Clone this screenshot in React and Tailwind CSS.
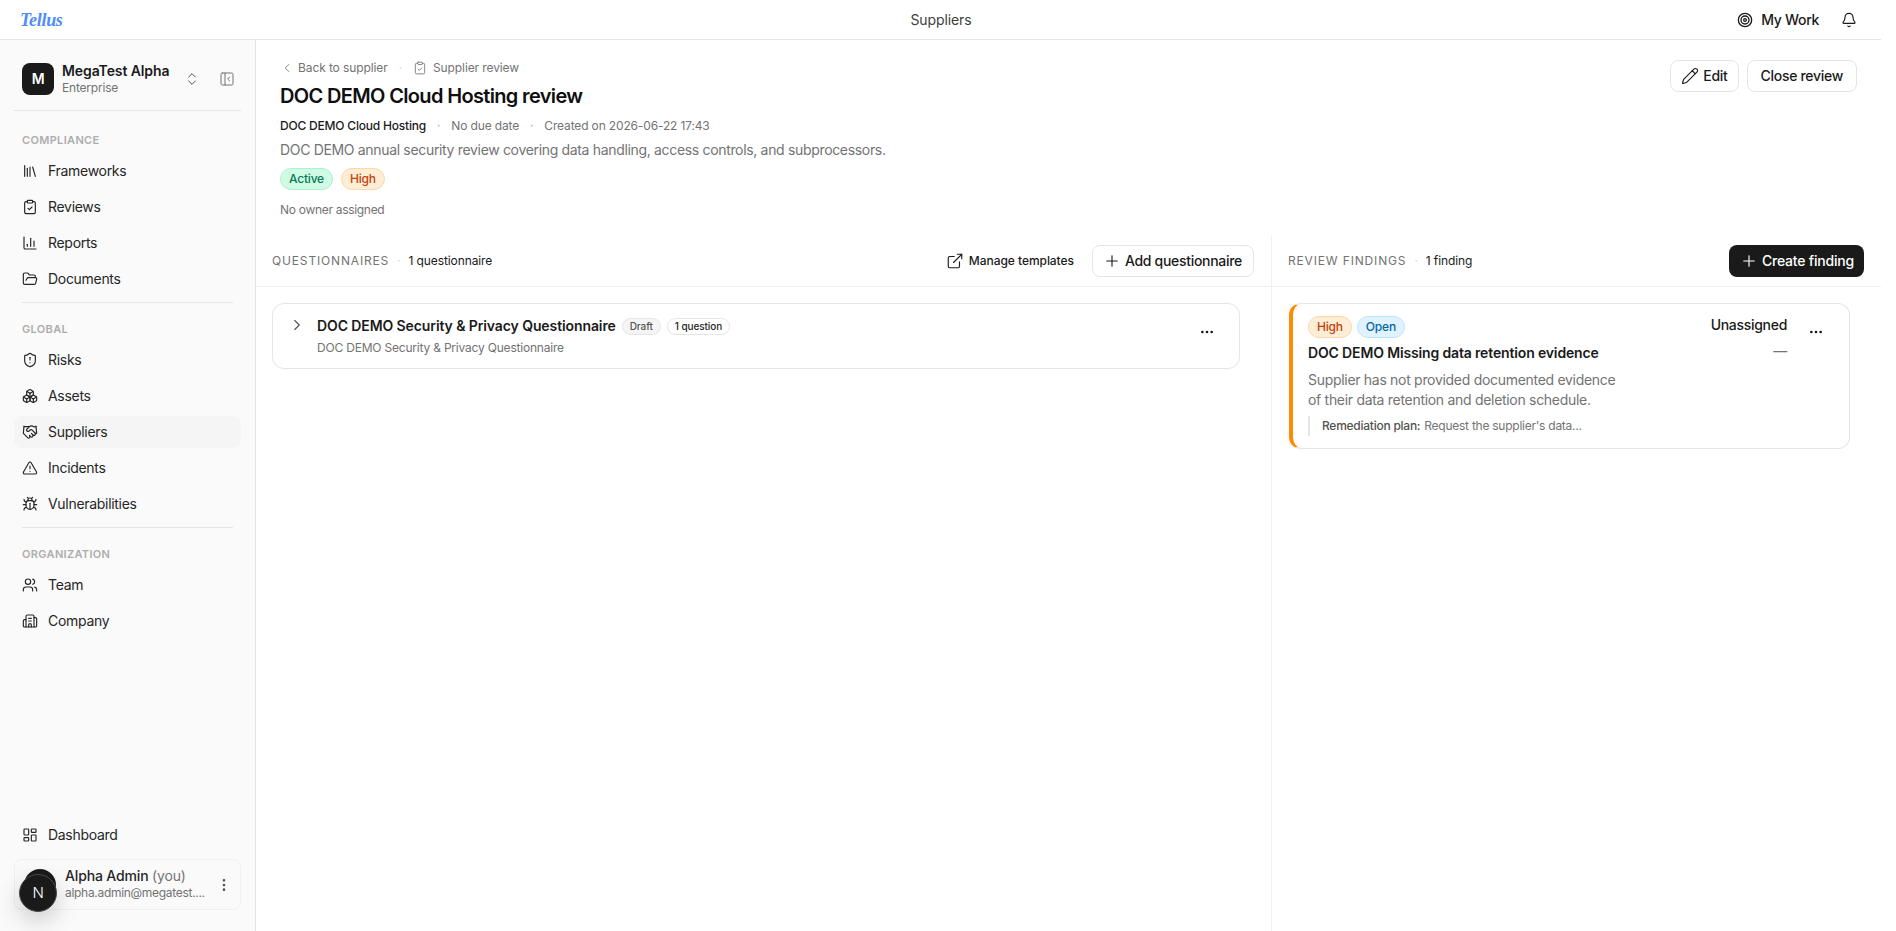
import {
  Bell,
  Boxes,
  Bug,
  Building2,
  ChartColumn,
  ChevronLeft,
  ChevronRight,
  ChevronsUpDown,
  ClipboardCheck,
  Ellipsis,
  EllipsisVertical,
  ExternalLink,
  FolderOpen,
  Handshake,
  LayoutDashboard,
  Library,
  PanelLeftClose,
  Pencil,
  Plus,
  ShieldAlert,
  Target,
  TriangleAlert,
  Users,
} from "lucide-react";

const compliance = [
  ["Frameworks", Library],
  ["Reviews", ClipboardCheck],
  ["Reports", ChartColumn],
  ["Documents", FolderOpen],
];
const globalNav = [
  ["Risks", ShieldAlert],
  ["Assets", Boxes],
  ["Suppliers", Handshake, true],
  ["Incidents", TriangleAlert],
  ["Vulnerabilities", Bug],
];
const organization = [
  ["Team", Users],
  ["Company", Building2],
];

function NavItem({ label, icon: Icon, active }) {
  return (
    <div
      className={`flex h-8 items-center gap-[10px] rounded-lg px-2 text-sm text-[#262626] ${
        active ? "bg-[#f5f5f5]" : ""
      }`}
    >
      <Icon size={16} strokeWidth={1.75} className="shrink-0" />
      <span>{label}</span>
    </div>
  );
}

function NavGroup({ title, items }) {
  return (
    <div>
      <p className="flex h-[26px] items-center px-2 pt-[2px] text-[11px] font-semibold tracking-[0.03em] text-[#adadad] uppercase">
        {title}
      </p>
      <div className="mt-[3px] flex flex-col gap-1">
        {items.map(([label, icon, active]) => (
          <NavItem key={label} label={label} icon={icon} active={active} />
        ))}
      </div>
    </div>
  );
}

function Badge({ className, children }) {
  return (
    <span
      className={`inline-flex h-[22px] items-center rounded-full border px-[8px] text-xs font-medium tracking-[-0.2px] ${className}`}
    >
      {children}
    </span>
  );
}

function Sidebar() {
  return (
    <aside className="flex w-[256px] shrink-0 flex-col border-r border-[#e5e5e5] bg-[#fafafa]">
      <div className="mx-[14px] flex h-[71px] items-center border-b border-[#e5e5e5] pt-[8px] pl-2">
        <div className="flex h-8 w-8 items-center justify-center rounded-lg bg-[#1a1a1a] text-sm font-semibold text-white">
          M
        </div>
        <div className="ml-2 flex-1">
          <p className="text-sm leading-[18px] font-semibold tracking-[-0.1px] text-[#1a1a1a]">
            MegaTest Alpha
          </p>
          <p className="text-xs leading-4 tracking-[-0.2px] text-[#737373]">Enterprise</p>
        </div>
        <ChevronsUpDown size={16} strokeWidth={1.5} className="mr-[19px] text-[#525252]" />
        <PanelLeftClose size={16} strokeWidth={1.5} className="mr-[6px] text-[#737373]" />
      </div>
      <div className="mx-[14px] mt-[15px] flex flex-1 flex-col">
        <NavGroup title="Compliance" items={compliance} />
        <div className="mx-2 mt-[7px] mb-[12px] border-t border-[#e5e5e5]" />
        <NavGroup title="Global" items={globalNav} />
        <div className="mx-2 mt-[7px] mb-[12px] border-t border-[#e5e5e5]" />
        <NavGroup title="Organization" items={organization} />
        <div className="mt-auto">
          <NavItem label="Dashboard" icon={LayoutDashboard} />
          <div className="mt-2 mb-[21px] flex h-[51px] items-center rounded-lg border border-[#f0f0f0] pr-[8px] pl-[9px]">
            <div className="mt-[9px] h-8 w-8 shrink-0 self-start rounded-full bg-[#1a1a1a]" />
            <div className="ml-[9px] min-w-0 flex-1 pb-[1px]">
              <p className="text-sm leading-[18px] font-medium tracking-[-0.15px] text-[#262626]">
                Alpha Admin <span className="font-normal text-[#737373]">(you)</span>
              </p>
              <p className="truncate text-xs leading-4 tracking-[-0.3px] text-[#737373]">
                alpha.admin@megatest....
              </p>
            </div>
            <EllipsisVertical size={16} className="shrink-0 text-[#525252]" />
          </div>
        </div>
      </div>
    </aside>
  );
}

function ReviewHeader() {
  return (
    <div className="flex h-[195px] shrink-0 justify-between pt-[19px] pr-6 pl-6">
      <div>
        <div className="flex h-[18px] items-center text-xs tracking-[-0.1px] text-[#737373]">
          <ChevronLeft size={14} strokeWidth={1.5} className="mr-[4px]" />
          <span>Back to supplier</span>
          <span className="mx-[11px] text-[#d4d4d4]">·</span>
          <ClipboardCheck size={14} strokeWidth={1.5} className="mr-[6px]" />
          <span>Supplier review</span>
        </div>
        <h1 className="mt-[5px] text-xl leading-7 font-semibold tracking-[-0.65px] text-[#0f0f0f]">
          DOC DEMO Cloud Hosting review
        </h1>
        <div className="mt-[7px] flex h-[18px] items-center text-xs tracking-[-0.15px] text-[#737373]">
          <span className="font-medium tracking-[-0.2px] text-[#1a1a1a]">DOC DEMO Cloud Hosting</span>
          <span className="mx-[11px] text-[#a8a8a8]">·</span>
          <span>No due date</span>
          <span className="mx-[11px] text-[#a8a8a8]">·</span>
          <span>Created on 2026-06-22 17:43</span>
        </div>
        <p className="mt-[5px] text-sm leading-5 tracking-[-0.33px] text-[#737373]">
          DOC DEMO annual security review covering data handling, access controls, and subprocessors.
        </p>
        <div className="mt-[8px] flex gap-2">
          <Badge className="border-[#a7f3d0] bg-[#d1fae5] text-[#047857]">Active</Badge>
          <Badge className="border-[#fed7aa] bg-[#ffedd5] text-[#c2410c]">High</Badge>
        </div>
        <p className="mt-[12px] text-xs leading-4 tracking-[-0.3px] text-[#737373]">No owner assigned</p>
      </div>
      <div className="flex gap-2 pt-[1px]">
        <button className="flex h-8 items-center gap-1 rounded-lg border border-[#e5e5e5] px-[10px] text-sm font-medium text-[#1a1a1a]">
          <Pencil size={18} strokeWidth={1.5} />
          Edit
        </button>
        <button className="h-8 rounded-lg border border-[#e5e5e5] px-[13px] text-sm font-medium text-[#1a1a1a]">
          Close review
        </button>
      </div>
    </div>
  );
}

function PanelHeader({ title, count, children, className }) {
  return (
    <div
      className={`flex h-[52px] shrink-0 items-center justify-between border-b border-[#f0f0f0] ${className}`}
    >
      <div className="flex items-center text-xs tracking-[-0.1px]">
        <span className="tracking-[0.07em] text-[#737373] uppercase">{title}</span>
        <span className="mx-[8px] text-[#d4d4d4]">·</span>
        <span className="text-[#1a1a1a]">{count}</span>
      </div>
      <div className="flex items-center gap-[18px]">{children}</div>
    </div>
  );
}

function QuestionnairesPanel() {
  return (
    <section className="flex w-[1016px] shrink-0 flex-col border-r border-[#f0f0f0]">
      <PanelHeader title="Questionnaires" count="1 questionnaire" className="pr-[17px] pl-4">
        <button className="flex items-center gap-[5px] text-xs font-medium tracking-[-0.05px] text-[#1a1a1a]">
          <ExternalLink size={18} strokeWidth={1.5} />
          Manage templates
        </button>
        <button className="flex h-8 items-center gap-1 rounded-lg border border-[#e5e5e5] pr-[11px] pl-[10px] text-sm font-medium text-[#1a1a1a]">
          <Plus size={18} strokeWidth={1.5} />
          Add questionnaire
        </button>
      </PanelHeader>
      <div className="pt-4 pr-[31px] pl-4">
        <div className="flex h-[66px] items-center rounded-xl border border-[#e5e5e5] pr-[24px]">
          <ChevronRight size={18} strokeWidth={1.5} className="mt-[12px] ml-[15px] self-start text-[#525252]" />
          <div className="ml-[11px] flex-1">
            <div className="flex items-center gap-[6px]">
              <span className="text-sm font-semibold tracking-[-0.1px] text-[#1a1a1a]">
                DOC DEMO Security &amp; Privacy Questionnaire
              </span>
              <span className="inline-flex h-[17px] items-center rounded-full border border-[#e5e5e5] bg-[#f5f5f5] px-[7px] text-[10px] font-medium tracking-[-0.1px] text-[#525252]">
                Draft
              </span>
              <span className="inline-flex h-[17px] items-center rounded-full border border-[#e5e5e5] px-[7px] text-[10px] font-medium tracking-[-0.1px] text-[#262626]">
                1 question
              </span>
            </div>
            <p className="mt-[4px] text-xs leading-4 tracking-[-0.2px] text-[#737373]">
              DOC DEMO Security &amp; Privacy Questionnaire
            </p>
          </div>
          <Ellipsis size={16} className="mb-[8px] text-[#1a1a1a]" />
        </div>
      </div>
    </section>
  );
}

function FindingsPanel() {
  return (
    <section className="flex min-w-0 flex-1 flex-col">
      <PanelHeader title="Review findings" count="1 finding" className="pr-[17px] pl-[16px]">
        <button className="flex h-8 items-center gap-1 rounded-lg bg-[#1a1a1a] pr-[10px] pl-[11px] text-sm font-medium tracking-[-0.2px] text-white">
          <Plus size={18} strokeWidth={1.5} />
          Create finding
        </button>
      </PanelHeader>
      <div className="pt-4 pr-[31px] pl-[17px]">
        <div className="flex h-[146px] rounded-xl border border-l-[4px] border-[#e5e5e5] border-l-[#ff8c00] pt-[12px] pr-[25px] pl-[15px]">
          <div className="flex-1">
            <div className="flex gap-[5px]">
              <Badge className="border-[#fed7aa] bg-[#ffedd5] text-[#c2410c]">High</Badge>
              <Badge className="border-[#bae6fd] bg-[#e0f2fe] text-[#0369a1]">Open</Badge>
            </div>
            <p className="mt-[4px] text-sm leading-[22px] font-semibold tracking-[-0.15px] text-[#1a1a1a]">
              DOC DEMO Missing data retention evidence
            </p>
            <p className="mt-[6px] w-[320px] text-sm leading-5 text-[#737373]">
              Supplier has not provided documented evidence of their data retention and deletion schedule.
            </p>
            <div className="mt-[6px] flex h-[20px] items-center border-l-2 border-[#e5e5e5] pl-[12px] text-xs tracking-[-0.25px]">
              <span className="font-medium text-[#525252]">Remediation plan:</span>
              <span className="ml-1 text-[#737373]">Request the supplier's data...</span>
            </div>
          </div>
          <div className="text-right">
            <p className="-mt-[1px] text-sm leading-5 font-medium text-[#1a1a1a]">Unassigned</p>
            <p className="mt-[6px] text-sm leading-5 text-[#737373]">—</p>
          </div>
          <Ellipsis size={16} className="mt-[8px] ml-[21px] text-[#1a1a1a]" />
        </div>
      </div>
    </section>
  );
}

export default function App() {
  return (
    <div
      className="relative h-screen overflow-hidden bg-white pr-[15px] tracking-[-0.3px] text-[#1a1a1a]"
      style={{ fontFamily: "Inter, sans-serif" }}
    >
      <div className="flex h-full flex-col">
        <header className="flex h-10 shrink-0 items-center justify-between border-b border-[#e5e5e5] pr-[24px] pl-[20px]">
          <span className="font-['Liberation_Serif',serif] text-lg leading-none font-bold text-[#4d8dff] italic">
            Tellus
          </span>
          <span className="absolute left-[941px] -translate-x-1/2 text-sm tracking-[-0.1px] text-[#404040]">
            Suppliers
          </span>
          <div className="flex items-center">
            <Target size={16} strokeWidth={2} className="mr-[8px]" />
            <span className="text-sm font-medium">My Work</span>
            <Bell size={16} strokeWidth={1.75} className="ml-[22px]" />
          </div>
        </header>
        <div className="flex min-h-0 flex-1">
          <Sidebar />
          <main className="flex min-w-0 flex-1 flex-col">
            <ReviewHeader />
            <div className="flex min-h-0 flex-1">
              <QuestionnairesPanel />
              <FindingsPanel />
            </div>
          </main>
        </div>
      </div>
      <div className="absolute bottom-[19px] left-[19px] flex h-[38px] w-[38px] items-center justify-center rounded-full border border-[#4a4a4a] bg-[#1a1a1a] text-[15px] font-light text-white shadow-[0_8px_24px_rgba(0,0,0,0.2)]">
        N
      </div>
    </div>
  );
}
